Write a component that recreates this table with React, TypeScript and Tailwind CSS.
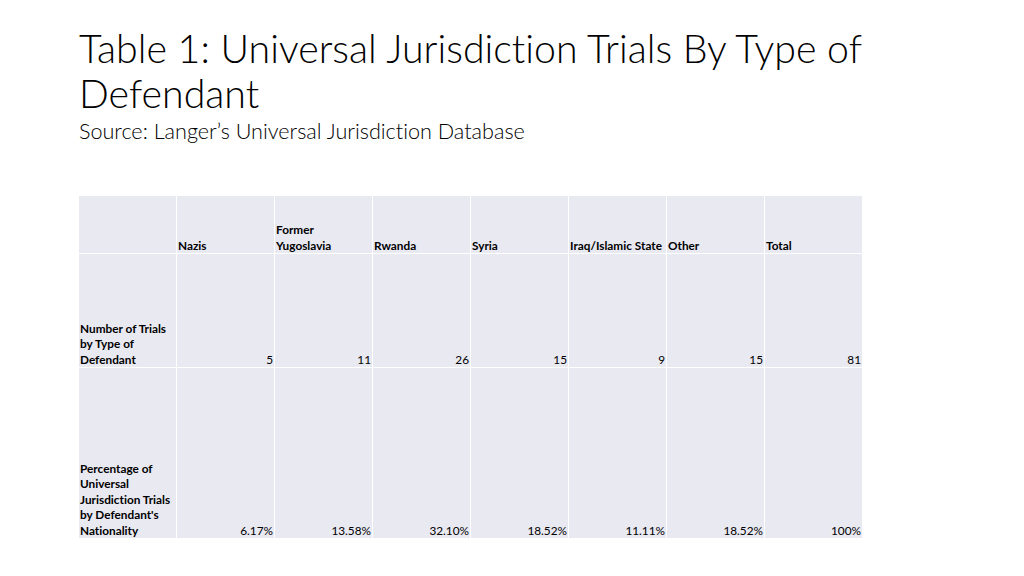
const columns = ['Nazis', 'Former Yugoslavia', 'Rwanda', 'Syria', 'Iraq/Islamic State', 'Other', 'Total'];

const rows = [
  {
    label: 'Number of Trials by Type of Defendant',
    values: ['5', '11', '26', '15', '9', '15', '81'],
    height: 'h-[114px]',
  },
  {
    label: "Percentage of Universal Jurisdiction Trials by Defendant's Nationality",
    values: ['6.17%', '13.58%', '32.10%', '18.52%', '11.11%', '18.52%', '100%'],
    height: 'h-[171px]',
  },
];

export default function App() {
  return (
    <div className="w-[1024px] h-[576px] bg-white overflow-hidden text-black font-['Lato','Liberation_Sans',sans-serif] [font-variant-ligatures:none]">
      <div className="pl-[79px] pt-[25px]">
        <h1 className="text-[39.3px] font-light leading-[45px] w-[860px]">
          Table 1: Universal Jurisdiction Trials By Type of Defendant
        </h1>
        <p className="text-[21.6px] font-light leading-[28px] mt-[2px]">
          Source: Langer’s Universal Jurisdiction Database
        </p>
      </div>

      <table className="ml-[78px] mt-[50px] border-collapse table-fixed w-[784px] text-[11.8px] leading-[15.5px]">
        <tbody>
          <tr className="h-[58px]">
            <td className="w-[98px] bg-[#e9e9f2] border border-white" />
            {columns.map((c) => (
              <td key={c} className="w-[98px] bg-[#e9e9f2] border border-white align-bottom font-bold px-[1px] pb-0">
                <div className="w-[93px]">{c}</div>
              </td>
            ))}
          </tr>
          {rows.map((r) => (
            <tr key={r.label} className={r.height}>
              <td className="bg-[#e9e9f2] border border-white align-bottom font-bold px-[1px] pb-0">
                <div className="w-[93px]">{r.label}</div>
              </td>
              {r.values.map((v, i) => (
                <td key={i} className="bg-[#e9e9f2] border border-white align-bottom text-right px-[1px] pb-0">
                  {v}
                </td>
              ))}
            </tr>
          ))}
        </tbody>
      </table>
    </div>
  );
}
